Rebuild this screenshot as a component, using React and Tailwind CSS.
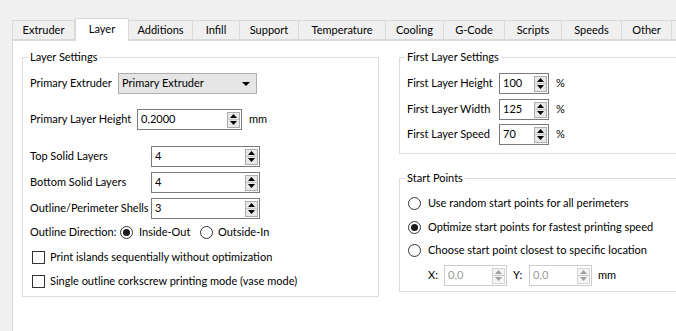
import React from "react";

const tabs = [
  ["Extruder", "w-[63px]"],
  ["Layer", "w-[54px]"],
  ["Additions", "w-[64px]"],
  ["Infill", "w-[47px]"],
  ["Support", "w-[59px]"],
  ["Temperature", "w-[87px]"],
  ["Cooling", "w-[58px]"],
  ["G-Code", "w-[61px]"],
  ["Scripts", "w-[57px]"],
  ["Speeds", "w-[60px]"],
  ["Other", "w-[50px]"],
  ["", "w-[40px]"],
];

function Arrows({ disabled }) {
  const fill = disabled ? "#a0a0a0" : "#000";
  return (
    <div
      className={`mr-[1px] flex h-[16px] w-[13px] flex-col border ${
        disabled ? "border-[#d4d4d4] bg-[#f4f4f4]" : "border-[#adadad] bg-[#e8e8e8]"
      }`}
    >
      <div className="flex flex-1 items-center justify-center border-b border-[#c8c8c8]">
        <svg width="7" height="4" viewBox="0 0 7 4">
          <path d="M0 4 L3.5 0 L7 4 Z" fill={fill} />
        </svg>
      </div>
      <div className="flex flex-1 items-center justify-center">
        <svg width="7" height="4" viewBox="0 0 7 4">
          <path d="M0 0 L3.5 4 L7 0 Z" fill={fill} />
        </svg>
      </div>
    </div>
  );
}

function Spin({ value, className, disabled }) {
  return (
    <div
      className={`flex h-[21px] items-center justify-between border bg-white pl-[3px] ${className} ${
        disabled ? "border-[#cccccc] text-[#9a9a9a]" : "border-[#7a7a7a]"
      }`}
    >
      <span>{value}</span>
      <Arrows disabled={disabled} />
    </div>
  );
}

function Radio({ checked }) {
  return (
    <div className="flex h-[13px] w-[13px] shrink-0 items-center justify-center rounded-full border border-[#333333] bg-white">
      {checked && <div className="h-[7px] w-[7px] rounded-full bg-[#1a1a1a]" />}
    </div>
  );
}

function Check() {
  return <div className="h-[13px] w-[13px] border border-[#333333] bg-white" />;
}

function Group({ title, className, children }) {
  return (
    <fieldset className={`border border-[#dcdcdc] px-[7px] ${className}`}>
      <legend className="-ml-[2px] px-[2px] leading-[16px]">{title}</legend>
      {children}
    </fieldset>
  );
}

export default function App() {
  return (
    <div className="h-[331px] w-[676px] overflow-hidden whitespace-nowrap bg-[#f0f0f0] text-[11px] text-black [font-family:'Segoe_UI',Lato,sans-serif]">
      <div className="flex items-end pl-[12px] pt-[18px]">
        {tabs.map(([t, w]) =>
          t === "Layer" ? (
            <div
              key={t}
              className={`relative z-10 -mb-[1px] flex h-[23px] shrink-0 items-center justify-center border border-b-0 border-[#d9d9d9] bg-white pb-[1px] ${w}`}
            >
              {t}
            </div>
          ) : (
            <div
              key={t}
              className={`flex h-[20px] shrink-0 items-center justify-center border border-l-0 border-[#d9d9d9] bg-[#f0f0f0] first:border-l ${w}`}
            >
              {t}
            </div>
          )
        )}
      </div>
      <div className="ml-[12px] flex h-[292px] gap-[20px] border-l border-t border-[#d9d9d9] bg-white pl-[9px] pt-[8px]">
        <Group title="Layer Settings" className="h-[248px] w-[357px] shrink-0">
          <div className="mt-[8px] flex h-[21px] items-center">
            <span className="w-[88px]">Primary Extruder</span>
            <div className="flex h-[21px] w-[139px] items-center justify-between border border-[#adadad] bg-[#e5e5e5] pl-[3px] pr-[6px]">
              <span>Primary Extruder</span>
              <svg width="8" height="4" viewBox="0 0 8 4">
                <path d="M0 0 L4 4 L8 0 Z" fill="#000" />
              </svg>
            </div>
          </div>
          <div className="mt-[15px] flex h-[21px] items-center">
            <span className="w-[107px]">Primary Layer Height</span>
            <Spin value="0,2000" className="w-[105px]" />
            <span className="ml-[7px]">mm</span>
          </div>
          <div className="mt-[16px] flex h-[21px] items-center">
            <span className="w-[121px]">Top Solid Layers</span>
            <Spin value="4" className="w-[109px]" />
          </div>
          <div className="mt-[5px] flex h-[21px] items-center">
            <span className="w-[121px]">Bottom Solid Layers</span>
            <Spin value="4" className="w-[109px]" />
          </div>
          <div className="mt-[5px] flex h-[21px] items-center">
            <span className="w-[121px]">Outline/Perimeter Shells</span>
            <Spin value="3" className="w-[109px]" />
          </div>
          <div className="mt-[3px] flex h-[21px] items-center">
            <span className="w-[90px]">Outline Direction:</span>
            <Radio checked />
            <span className="ml-[6px] w-[61px]">Inside-Out</span>
            <Radio />
            <span className="ml-[5px]">Outside-In</span>
          </div>
          <div className="mt-[4px] flex h-[21px] items-center">
            <div className="ml-[2px]">
              <Check />
            </div>
            <span className="ml-[5px]">Print islands sequentially without optimization</span>
          </div>
          <div className="mt-[3px] flex h-[21px] items-center">
            <div className="ml-[2px]">
              <Check />
            </div>
            <span className="ml-[5px]">Single outline corkscrew printing mode (vase mode)</span>
          </div>
        </Group>

        <div className="flex w-[300px] shrink-0 flex-col gap-[16px]">
          <Group title="First Layer Settings" className="h-[105px]">
            <div className="mt-[8px] flex h-[21px] items-center">
              <span className="w-[92px]">First Layer Height</span>
              <Spin value="100" className="w-[50px]" />
              <span className="ml-[7px]">%</span>
            </div>
            <div className="mt-[5px] flex h-[21px] items-center">
              <span className="w-[92px]">First Layer Width</span>
              <Spin value="125" className="w-[50px]" />
              <span className="ml-[7px]">%</span>
            </div>
            <div className="mt-[4px] flex h-[21px] items-center">
              <span className="w-[92px]">First Layer Speed</span>
              <Spin value="70" className="w-[50px]" />
              <span className="ml-[7px]">%</span>
            </div>
          </Group>

          <Group title="Start Points" className="h-[122px]">
            <div className="mt-[7px] flex h-[21px] items-center pl-[1px]">
              <Radio />
              <span className="ml-[7px]">Use random start points for all perimeters</span>
            </div>
            <div className="mt-[3px] flex h-[21px] items-center pl-[1px]">
              <Radio checked />
              <span className="ml-[7px]">Optimize start points for fastest printing speed</span>
            </div>
            <div className="mt-[2px] flex h-[21px] items-center pl-[1px]">
              <Radio />
              <span className="ml-[7px]">Choose start point closest to specific location</span>
            </div>
            <div className="mt-[4px] flex h-[21px] items-center pl-[21px]">
              <span className="w-[16px]">X:</span>
              <Spin value="0,0" className="w-[63px]" disabled />
              <span className="ml-[6px] w-[16px]">Y:</span>
              <Spin value="0,0" className="w-[63px]" disabled />
              <span className="ml-[6px]">mm</span>
            </div>
          </Group>
        </div>
      </div>
    </div>
  );
}
